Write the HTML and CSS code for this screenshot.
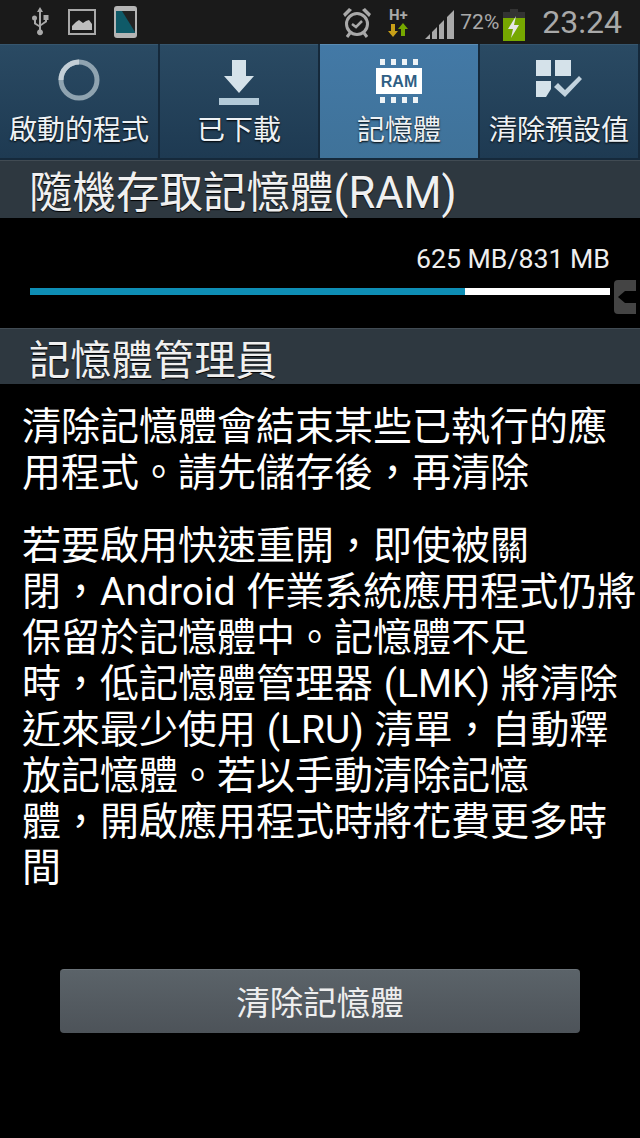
FILE: index.html
```html
<!DOCTYPE html>
<html lang="zh-Hant">
<head>
    <meta charset="UTF-8">
    <title>記憶體</title>
    <link rel="stylesheet" href="styles.css">
</head>
<body>
<div class="statusbar">
    <div class="status-left">
        <svg class="ic-usb" width="20" height="32" viewBox="0 0 20 32"><path d="M10 1l3 5h-2v17.500a3 3 0 1 1-2 0V6H7z" fill="#a9a9a9"/><path d="M9 21l-5-3v-4h2v3l3 2zM11 18l4-3v-2h2v3l-6 4z" fill="#a9a9a9"/><circle cx="4.500" cy="12" r="2.500" fill="#a9a9a9"/><rect x="13.500" y="9" width="5" height="5" fill="#a9a9a9"/></svg>
        <svg class="ic-pic" width="28" height="26" viewBox="0 0 28 26"><rect x="1" y="1" width="26" height="24" fill="none" stroke="#a9a9a9" stroke-width="2"/><path d="M4 21v-4l4-4 3-2 4 3 3-2 3-1 3 4v6z" fill="#bdbdbd"/></svg>
        <svg class="ic-phone" width="23" height="32" viewBox="0 0 23 32"><rect width="23" height="32" rx="3" fill="#b5b5b5"/><rect x="2" y="5" width="19" height="22" fill="#222"/><path d="M2 5h6l13 21v1H2z" fill="#0f5a68"/></svg>
    </div>
    <div class="status-right">
        <svg class="ic-alarm" width="30" height="32" viewBox="0 0 30 32"><circle cx="15" cy="18" r="10.500" fill="none" stroke="#a9a9a9" stroke-width="3"/><path d="M10 18l4 3 6-6" fill="none" stroke="#a9a9a9" stroke-width="2.500"/><path d="M1 8l6-6 3 2-7 7zM29 8l-6-6-3 2 7 7z" fill="#a9a9a9"/><path d="M8 27l-3 4M22 27l3 4" stroke="#a9a9a9" stroke-width="3"/></svg>
        <div class="net">
            <span class="net-type">H+</span>
            <svg width="20" height="14" viewBox="0 0 20 14"><path d="M3 1h4v7h3l-5 6-5-6h3z" fill="#c8a018"/><path d="M13 13h4V6h3l-5-6-5 6h3z" fill="#76a800"/></svg>
        </div>
        <svg class="ic-signal" width="30" height="29" viewBox="0 0 30 29"><path d="M0 29l5-5v5zM7 29v-7l5-5v12zM14 29V15l5-5v19zM22 29V7l7-7v29z" fill="#a9a9a9"/></svg>
        <span class="battery-pct">72%</span>
        <svg class="ic-battery" width="22" height="32" viewBox="0 0 22 32"><rect x="7" width="8" height="4" fill="#333"/><rect y="3" width="22" height="6" fill="#333"/><rect y="9" width="22" height="23" fill="#76a800"/><path d="M13 7l-8 13h5l-2 9 8-13h-5z" fill="#e6e6e6"/></svg>
        <span class="clock">23:24</span>
    </div>
</div>

<div class="tabs">
    <div class="tab">
        <svg width="42" height="42" viewBox="0 0 42 42"><circle cx="21" cy="21" r="18" fill="none" stroke="#8fa3b0" stroke-width="5"/><path d="M21 3a18 18 0 0 0-18 18" fill="none" stroke="#c3ced6" stroke-width="5"/></svg>
        <span>啟動的程式</span>
    </div>
    <div class="tab">
        <svg width="40" height="46" viewBox="0 0 40 46"><path d="M13 1h14v16h8L20 34 5 17h8z" fill="#d5e2ea"/><rect y="39" width="40" height="7" fill="#b3cad8"/></svg>
        <span>已下載</span>
    </div>
    <div class="tab tab-active">
        <svg width="46" height="44" viewBox="0 0 46 44"><path d="M4 0h5v6H4zM15 0h5v6h-5zM26 0h5v6h-5zM37 0h5v6h-5zM4 38h5v6H4zM15 38h5v6h-5zM26 38h5v6h-5zM37 38h5v6h-5z" fill="#eef3f6"/><rect y="9" width="46" height="26" fill="#fff"/><text x="23" y="27.500" class="ram-label">RAM</text></svg>
        <span>記憶體</span>
    </div>
    <div class="tab">
        <svg width="48" height="42" viewBox="0 0 48 42"><path d="M1 1h15v16H1zM20 1h16v16H20zM1 22h15v8l-5 8H1z" fill="#d5e2ea"/><path d="M19 28l4-4 7 7 14-14 3 3-17 18z" fill="#c3d3de"/></svg>
        <span>清除預設值</span>
    </div>
</div>

<div class="section-head head-ram">隨機存取記憶體(RAM)</div>
<div class="usage">
    <div class="usage-text">625 MB/831 MB</div>
    <div class="bar"><div class="bar-fill" style="width: 75%"></div></div>
    <svg class="handle" width="23" height="34" viewBox="0 0 23 34"><path d="M23 0H5a4 4 0 0 0-4 4v26a4 4 0 0 0 4 4h18z" fill="#444"/><path d="M5 17l7-6h11v12H12z" fill="#000"/></svg>
</div>
<div class="section-head head-mem">記憶體管理員</div>
<div class="content">
    <p>清除記憶體會結束某些已執行的應用程式。請先儲存後，再清除</p>
    <p>若要啟用快速重開，即使被關<br>閉，Android 作業系統應用程式仍將<br>保留於記憶體中。記憶體不足<br>時，低記憶體管理器 (LMK) 將清除<br>近來最少使用 (LRU) 清單，自動釋<br>放記憶體。若以手動清除記憶<br>體，開啟應用程式時將花費更多時<br>間</p>
</div>
<div class="action">
    <button class="clear-btn">清除記憶體</button>
</div>
</body>
</html>
```
FILE: styles.css
```css
* {
    margin: 0;
    padding: 0;
    box-sizing: border-box;
}

body {
    position: relative;
    width: 640px;
    height: 1138px;
    overflow: hidden;
    background: #000;
    color: #fff;
    font-family: Roboto, "Noto Sans CJK TC", sans-serif;
}

.statusbar {
    height: 44px;
    background: #1a1a1a;
    display: flex;
    justify-content: space-between;
    align-items: center;
    padding: 0 18px 0 30px;
}

.status-left,
.status-right {
    display: flex;
    align-items: center;
}

.ic-pic {
    margin-left: 18px;
}

.ic-phone {
    margin-left: 18px;
}

.net {
    display: flex;
    flex-direction: column;
    align-items: center;
    margin-left: 16px;
    line-height: 15px;
}

.net-type {
    font-size: 15px;
    font-weight: bold;
    color: #a9a9a9;
}

.ic-signal {
    margin-left: 17px;
    margin-top: 5px;
}

.battery-pct {
    font-size: 21px;
    color: #a9a9a9;
    margin-left: 5px;
}

.ic-battery {
    margin-left: 4px;
    margin-top: 6px;
}

.clock {
    font-size: 32px;
    color: #a9a9a9;
    margin-left: 17px;
}

.tabs {
    height: 116px;
    display: grid;
    grid-template-columns: repeat(4, 1fr);
    background: #15293b;
}

.tab {
    height: 114px;
    margin-right: 2px;
    padding-top: 14px;
    border-top: 1px solid #36566e;
    background: linear-gradient(#2a4a63, #1e3a52);
    display: flex;
    flex-direction: column;
    align-items: center;
    justify-content: space-between;
    padding-bottom: 9px;
}

.tab span {
    font-size: 28px;
    line-height: 36px;
    color: #eef2f5;
    text-shadow: 0 1px 2px #000;
}

.tab-active {
    border-top-color: #5a8cb4;
    background: linear-gradient(#4379a6, #3f7299);
}

.ram-label {
    font-family: "Liberation Sans", sans-serif;
    font-size: 16px;
    font-weight: bold;
    fill: #2f5f85;
    text-anchor: middle;
}

.section-head {
    background: #2e3840;
    border-top: 1px solid #414b53;
    color: #f0f0f0;
    padding-left: 29px;
    display: flex;
    align-items: center;
    text-shadow: 0 1px 1px #000;
}

.head-ram {
    height: 58px;
    font-size: 43.500px;
}

.head-mem {
    height: 56px;
    font-size: 41.300px;
}

.usage {
    position: relative;
    height: 110px;
    padding: 26px 30px 0 30px;
}

.usage-text {
    text-align: right;
    font-size: 26.700px;
    line-height: 30px;
    color: #eee;
}

.bar {
    height: 7px;
    margin-top: 14px;
    background: #fff;
}

.bar-fill {
    height: 100%;
    background: #0e8eb5;
}

.handle {
    position: absolute;
    right: 4px;
    top: 62px;
}

.content {
    padding: 20px 0 0 22px;
    font-size: 39px;
    line-height: 46px;
    word-spacing: 1px;
    color: #fff;
}

.content p {
    margin-bottom: 27px;
    width: 618px;
}

.action {
    position: absolute;
    left: 60px;
    top: 969px;
}

.clear-btn {
    width: 520px;
    height: 64px;
    border: none;
    border-top: 1px solid #6a7278;
    border-radius: 4px;
    padding-bottom: 3px;
    background: linear-gradient(#5b6369, #4d5359);
    color: #eee;
    font-size: 33.500px;
    font-family: Roboto, "Noto Sans CJK TC", sans-serif;
}
```
